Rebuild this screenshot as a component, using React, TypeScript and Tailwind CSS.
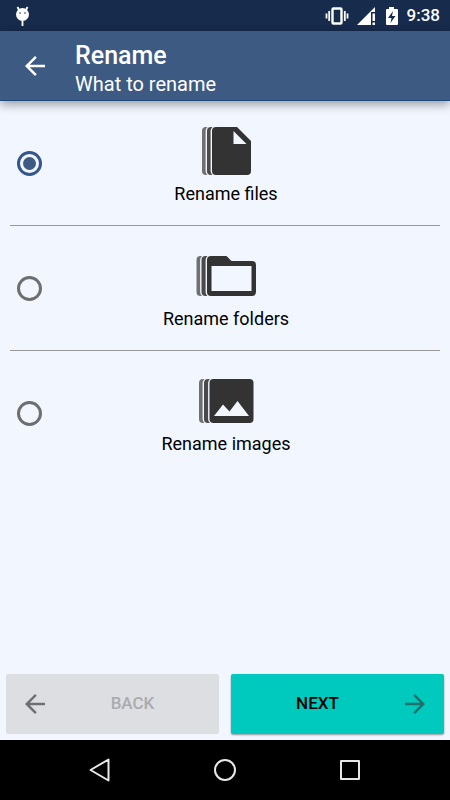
import React from "react";

const options = [
    { id: "files", label: "Rename files", Icon: FilesIcon },
    { id: "folders", label: "Rename folders", Icon: FoldersIcon },
    { id: "images", label: "Rename images", Icon: ImagesIcon },
];

// Each icon is a stack: two slivers peek out behind the front sheet,
// and the background-coloured stroke keeps the sheets apart.
const sheet = { stroke: "#f1f6ff", strokeWidth: 2.8, paintOrder: "stroke" };

function FilesIcon() {
    return (
        <svg viewBox="0 -1 64 60" className="w-16 h-15" fill="#333333" aria-hidden="true">
            <path fill="#707070" d="M17 6h-5a4 4 0 0 0-4 4v40a4 4 0 0 0 4 4h5z" />
            <path {...sheet} fill="#4a4a4a" d="M22 6h-5a4 4 0 0 0-4 4v40a4 4 0 0 0 4 4h5z" />
            <path {...sheet} d="M43 6H22a4 4 0 0 0-4 4v40a4 4 0 0 0 4 4H53a4 4 0 0 0 4-4V20z" />
            <path fill="#f1f6ff" d="M39.500 10v13h13z" />
        </svg>
    );
}

function FoldersIcon() {
    return (
        <svg viewBox="0 -1 64 60" className="w-16 h-15" fill="#333333" aria-hidden="true">
            <path fill="#707070" d="M11 10H6.500a4 4 0 0 0-4 4v32a4 4 0 0 0 4 4H11z" />
            <path {...sheet} fill="#4a4a4a" d="M16 10h-4.500a4 4 0 0 0-4 4v32a4 4 0 0 0 4 4H16z" />
            <path {...sheet} d="M32.500 10H17a4 4 0 0 0-4 4v32a4 4 0 0 0 4 4h41a4 4 0 0 0 4-4V19a4 4 0 0 0-4-4H37.500z" />
            <path fill="#f1f6ff" d="M17.500 20h40v25h-40z" />
        </svg>
    );
}

function ImagesIcon() {
    return (
        <svg viewBox="0 -1 64 60" className="w-16 h-15" fill="#333333" aria-hidden="true">
            <path fill="#707070" d="M14 8H9a4 4 0 0 0-4 4v36a4 4 0 0 0 4 4h5z" />
            <path {...sheet} fill="#4a4a4a" d="M19 8h-5a4 4 0 0 0-4 4v36a4 4 0 0 0 4 4h5z" />
            <rect {...sheet} x="15.500" y="8" width="44" height="44" rx="4" />
            <path fill="#f1f6ff" d="M20 45l9-11.500 6.500 7 8-10.500 11.500 15z" />
        </svg>
    );
}

function ArrowIcon({ className }: { className?: string }) {
    return (
        <svg viewBox="0 0 24 24" className={className} fill="currentColor" aria-hidden="true">
            <path d="M20 11H7.830l5.590-5.590L12 4l-8 8 8 8 1.410-1.410L7.830 13H20v-2z" />
        </svg>
    );
}

function StatusBar() {
    return (
        <div className="flex h-[31px] items-center bg-[#172b4d] pr-2.5 pl-4 text-white">
            {/* Debug bug */}
            <svg viewBox="0 0 14 20" className="w-3.5 h-5" fill="#ffffff" aria-hidden="true">
                <circle cx="6.500" cy="8.500" r="6.500" />
                <path d="M1.500 1l2 4M11.500 1l-2 4M6.500 15v5" stroke="#ffffff" strokeWidth="1.800" />
                <circle cx="4" cy="7" r="0.800" fill="#172b4d" />
                <circle cx="9" cy="7" r="0.800" fill="#172b4d" />
            </svg>
            <div className="ml-auto flex items-center">
                {/* Vibrate */}
                <svg viewBox="0 0 24 20" className="w-6 h-5" fill="none" stroke="#ffffff" aria-hidden="true">
                    <rect x="7.500" y="2.500" width="9" height="15" rx="1" strokeWidth="2.400" />
                    <path d="M1.500 7.500v5M4.200 5v10M19.800 5v10M22.500 7.500v5" strokeWidth="1.800" />
                </svg>
                {/* Signal */}
                <svg viewBox="0 0 20 20" className="ml-2 w-5 h-5" fill="#ffffff" aria-hidden="true">
                    <path d="M0 19L18 1v5h-4v13zM15.500 7.500H18v7.500h-2.500zM15.500 16.500H18V19h-2.500z" />
                </svg>
                {/* Battery */}
                <svg viewBox="0 0 14 20" className="ml-2 w-3.5 h-5" aria-hidden="true">
                    <path fill="#ffffff" d="M4 1h5v2h3a1 1 0 0 1 1 1v14a1 1 0 0 1-1 1H2a1 1 0 0 1-1-1V4a1 1 0 0 1 1-1h2z" />
                    <path fill="#172b4d" d="M8 5l-5 7h3.500L5.500 17l5-7H7z" />
                </svg>
                <span className="ml-2 text-[17px] font-medium">9:38</span>
            </div>
        </div>
    );
}

export default function App() {
    const [selected, setSelected] = React.useState("files");

    return (
        <div className="flex min-h-screen flex-col bg-[#f1f6ff] font-[Roboto,sans-serif] text-black">
            <StatusBar />

            <header className="flex h-[70px] items-center border-b border-[#1f4a80] bg-[#3d5a82] pl-5 text-white shadow-[0_3px_10px_rgba(0,0,0,0.4)]">
                <button type="button" aria-label="Go back">
                    <ArrowIcon className="size-[30px]" />
                </button>
                <div className="ml-[25px] pt-2">
                    <h1 className="text-[25px] leading-7 font-medium">Rename</h1>
                    <p className="text-xl leading-7">What to rename</p>
                </div>
            </header>

            <main className="flex-1 px-2.5">
                <div role="radiogroup" aria-label="What to rename" className="divide-y divide-[#999999]">
                    {options.map(({ id, label, Icon }) => (
                        <label key={id} className="grid h-[125px] items-center pl-0.5 last:h-[124px]">
                            <input
                                type="radio"
                                name="target"
                                value={id}
                                checked={selected === id}
                                onChange={() => setSelected(id)}
                                className="col-start-1 row-start-1 ml-[5px] size-[25px] appearance-none rounded-full border-3 border-[#6e6e6e] bg-clip-content p-[3px] checked:border-[#34568a] checked:bg-[#3d5a82]"
                            />
                            <span className="col-start-1 row-start-1 flex flex-col items-center gap-0.5">
                                <Icon />
                                <span className="text-lg leading-6">{label}</span>
                            </span>
                        </label>
                    ))}
                </div>
            </main>

            <div className="flex gap-3 px-1.5 pb-1.5">
                <button
                    type="button"
                    disabled
                    className="flex h-15 flex-1 items-center rounded-xs bg-[#dcdee2] px-3.5 text-[#a9abaf]"
                >
                    <ArrowIcon className="size-[30px] text-[#6e6f71]" />
                    <span className="flex-1 pl-2.5 text-center text-[17px] font-medium">BACK</span>
                </button>
                <button
                    type="button"
                    className="flex h-15 flex-1 items-center rounded-xs bg-[#00cabe] px-3.5 shadow-[0_1px_2px_rgba(0,0,0,0.4)]"
                >
                    <span className="flex-1 pr-2.5 text-center text-[17px] font-medium">NEXT</span>
                    <ArrowIcon className="size-[30px] rotate-180 text-[#1d716c]" />
                </button>
            </div>

            <nav className="flex h-15 items-center justify-center gap-[101px] bg-black text-[#e8e8e8]">
                <button type="button" aria-label="Back">
                    <svg viewBox="0 0 24 24" className="size-6" fill="none" stroke="currentColor" strokeWidth="2" strokeLinejoin="round">
                        <path d="M20.500 1.500v21L2.500 12z" />
                    </svg>
                </button>
                <button type="button" aria-label="Home">
                    <svg viewBox="0 0 24 24" className="size-6" fill="none" stroke="currentColor" strokeWidth="2">
                        <circle cx="12" cy="12" r="10" />
                    </svg>
                </button>
                <button type="button" aria-label="Recent apps">
                    <svg viewBox="0 0 24 24" className="size-6" fill="none" stroke="currentColor" strokeWidth="2" strokeLinejoin="round">
                        <rect x="3" y="3" width="18" height="18" />
                    </svg>
                </button>
            </nav>
        </div>
    );
}
